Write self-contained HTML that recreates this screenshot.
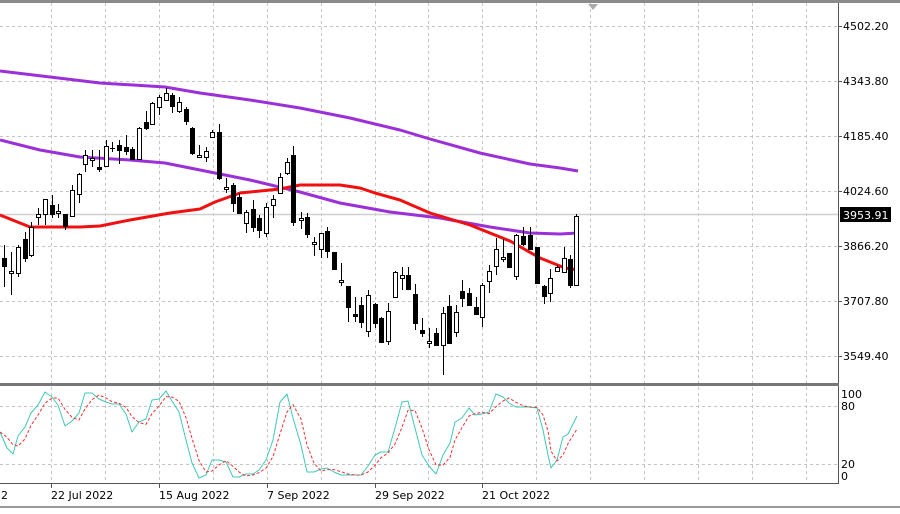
<!DOCTYPE html>
<html><head><meta charset="utf-8"><style>
body{margin:0;background:#fff;width:900px;height:510px;overflow:hidden;font-family:Tahoma,"DejaVu Sans","Liberation Sans",sans-serif}
svg text{font-family:"DejaVu Sans","Liberation Sans",sans-serif;font-size:11px;fill:#000}
</style></head><body>
<svg id="s" width="900" height="510" xmlns="http://www.w3.org/2000/svg">
<rect x="0" y="0" width="900" height="3" fill="#8a8a8a"/>
<g id="grid" stroke="#c4c4c4" stroke-dasharray="3,3" stroke-width="1"></g>
<line x1="0" y1="214.5" x2="838" y2="214.5" stroke="#d0d0d0" stroke-width="1.5"/>
<polygon points="588,4 598,4 593,10" fill="#aaa"/>
<g id="lines"></g>
<g id="candles"></g>
<g id="stoch"></g>
<line x1="838.5" y1="3" x2="838.5" y2="484" stroke="#555"/>
<rect x="0" y="383" width="839" height="3" fill="#777"/>
<line x1="0" y1="483.5" x2="839" y2="483.5" stroke="#555"/>
<rect x="0" y="506" width="900" height="2" fill="#999"/>
<g>
<text x="843" y="30">4502.20</text>
<text x="843" y="85">4343.80</text>
<text x="843" y="140">4185.40</text>
<text x="843" y="195">4024.60</text>
<text x="843" y="250">3866.20</text>
<text x="843" y="305">3707.80</text>
<text x="843" y="360">3549.40</text>
<rect x="840" y="207" width="51" height="15" fill="#000"/>
<text x="843" y="219" style="fill:#fff">3953.91</text>
<text x="841" y="398">100</text>
<text x="841" y="410">80</text>
<text x="841" y="468">20</text>
<text x="841" y="480">0</text>
<text x="-6" y="499">22</text>
<text x="51" y="499">22 Jul 2022</text>
<text x="159" y="499">15 Aug 2022</text>
<text x="267" y="499">7 Sep 2022</text>
<text x="375" y="499">29 Sep 2022</text>
<text x="482" y="499">21 Oct 2022</text>
</g>
<g id="ticks" stroke="#555"></g>
</svg>
<script>
const NS="http://www.w3.org/2000/svg";
function el(p,t,a){const e=document.createElementNS(NS,t);for(const k in a)e.setAttribute(k,a[k]);document.getElementById(p).appendChild(e);return e;}
const vx=[51,105,159,213,267,321,375,428,482,536,590,644,698,752,806];
vx.forEach(x=>{el('grid','line',{x1:x+.5,y1:3,x2:x+.5,y2:483});});
[26,81,136,191,246,301,356].forEach(y=>{el('grid','line',{x1:0,y1:y+.5,x2:838,y2:y+.5});el('ticks','line',{x1:838,y1:y+.5,x2:842,y2:y+.5});});
[406,464].forEach(y=>el('grid','line',{x1:0,y1:y+.5,x2:838,y2:y+.5}));
[51,159,267,375,482].forEach(x=>el('ticks','line',{x1:x+.5,y1:483,x2:x+.5,y2:488}));
function poly(p,pts,c,w,d){el(p,'polyline',{points:pts.map(a=>a.join(',')).join(' '),fill:'none',stroke:c,'stroke-width':w,'stroke-dasharray':d||'none','stroke-linejoin':'round'});}
poly('lines',[[0,71],[50,77],[100,83],[165,87],[200,93],[250,100],[300,108],[350,118],[400,130],[430,139],[480,153],[530,164],[560,168],[578,171]],'#9b30d8',3);
poly('lines',[[0,140],[40,150],[80,157],[130,160],[165,163],[200,170],[250,180],[300,192],[340,203],[390,212],[440,218],[490,227],[530,233],[560,234],[578,233]],'#9b30d8',3);
poly('lines',[[0,215],[30,227],[80,227],[100,226],[130,220],[170,213],[200,209],[215,202],[240,193],[280,189],[300,185],[340,185],[360,188],[375,193],[400,200],[430,213],[470,225],[510,241],[540,258],[565,268],[578,270]],'#f01010',3);
const C=[[4,258,266,245,287,0],[11,271,273,252,295,1],[18,247,273,245,277,1],[25,239,258,232,262,0],[31,227,255,222,257,1],[38,214,217,208,225,1],[45,199,214,199,225,1],[52,205,214,195,218,0],[58,211,213,204,218,1],[65,214,226,214,230,0],[72,190,216,185,217,1],[79,174,194,173,203,1],[85,155,164,150,172,1],[92,158,160,150,167,1],[99,167,169,150,172,0],[106,146,166,140,167,1],[112,148,149,142,152,1],[119,145,150,140,164,0],[126,147,151,135,155,0],[132,149,159,147,159,0],[139,128,159,127,159,1],[146,122,128,111,130,0],[152,103,124,102,124,1],[159,97,107,95,115,1],[166,93,100,88,101,1],[172,95,106,93,113,0],[179,102,111,97,113,1],[186,109,121,107,125,0],[192,128,153,127,155,0],[199,155,157,145,157,1],[206,151,157,147,162,1],[212,132,137,130,138,1],[219,132,178,124,180,0],[226,187,189,178,193,1],[233,185,203,183,212,0],[239,197,213,193,214,0],[246,212,223,210,233,1],[253,209,227,200,232,0],[259,218,230,215,238,0],[266,207,233,203,237,1],[273,199,205,195,218,1],[280,177,193,173,193,1],[287,162,173,158,175,1],[293,155,222,146,226,0],[301,218,220,212,229,1],[307,217,234,213,238,0],[314,242,244,237,256,1],[321,233,249,233,258,1],[327,231,251,227,258,0],[334,252,269,252,270,0],[341,280,282,263,286,1],[348,286,307,286,322,0],[355,314,316,297,322,0],[361,305,322,297,328,0],[368,295,331,290,337,1],[375,304,323,303,328,0],[381,318,342,317,343,0],[388,311,341,303,345,1],[395,272,297,271,297,1],[402,275,278,267,290,1],[408,275,289,267,290,0],[415,294,323,284,330,0],[422,330,333,318,337,0],[429,341,343,328,348,1],[436,333,345,328,346,0],[443,313,345,307,375,1],[449,306,343,295,344,0],[456,312,332,305,337,1],[462,291,298,280,307,0],[469,293,305,288,306,0],[476,307,314,297,315,0],[482,285,317,283,327,1],[489,271,281,265,293,1],[496,249,266,238,275,1],[503,257,259,239,262,1],[509,253,267,253,267,0],[516,235,276,234,280,1],[523,236,244,227,246,0],[530,235,249,227,250,0],[537,247,283,247,283,0],[544,286,296,285,304,0],[550,278,293,269,302,1],[557,267,271,265,272,1],[564,258,272,247,273,1],[570,259,285,255,288,0],[576,216,285,214,286,1]];
C.forEach(c=>{const[x,t,b,h,l,w]=c;el('candles','line',{x1:x+.5,y1:h,x2:x+.5,y2:l,stroke:'#000'});
 if(b-t<2){el('candles','line',{x1:x-2,y1:t+.5,x2:x+3,y2:t+.5,stroke:'#000'});}
 else el('candles','rect',{x:x-1.5,y:t+.5,width:4,height:b-t,fill:w?'#fff':'#000',stroke:'#000'});});
const T=[[0,432],[7,448],[13,454],[18,436],[25,427],[31,413],[38,405],[45,392],[52,397],[58,405],[65,426],[72,421],[79,413],[85,393],[92,393],[99,399],[106,402],[112,404],[119,404],[126,414],[132,432],[139,422],[146,419],[152,400],[159,399],[166,391],[172,401],[179,412],[186,440],[192,463],[199,478],[206,475],[212,460],[219,460],[226,462],[233,477],[239,477],[246,474],[253,474],[259,470],[266,460],[273,440],[280,402],[287,394],[293,418],[301,445],[307,472],[314,472],[321,469],[327,468],[334,472],[341,475],[348,475],[355,475],[361,475],[368,466],[375,455],[381,452],[388,452],[395,428],[402,402],[408,401],[415,428],[422,455],[429,466],[436,474],[443,455],[450,443],[455,422],[462,418],[469,408],[475,415],[482,414],[489,412],[496,394],[503,397],[509,403],[516,407],[523,407],[530,407],[537,408],[543,430],[548,455],[551,468],[557,460],[563,437],[568,434],[577,416]];
const S=T.map((p,i)=>{const a=T[Math.max(0,i-1)][1],b=T[Math.max(0,i-2)][1];return [p[0],(p[1]+a+b)/3];});
poly('stoch',T,'#40c8b8',1);
poly('stoch',S,'#f03030',1,'3,2');
</script>
</body></html>
